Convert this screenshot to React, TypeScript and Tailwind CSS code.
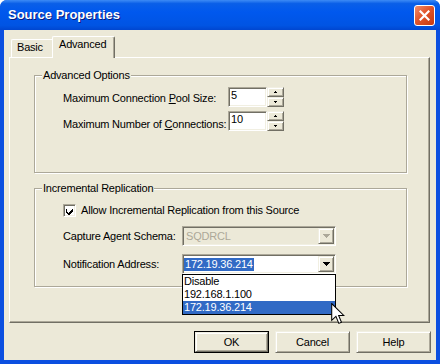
import React from 'react';

// classic 3D edges, XP beige scheme
const raised =
  'border border-t-[#f1efe2] border-l-[#f1efe2] border-r-[#716f64] border-b-[#716f64] shadow-[inset_1px_1px_0_#fff,inset_-1px_-1px_0_#aca899]';
const sunken =
  'border border-t-[#aca899] border-l-[#aca899] border-r-white border-b-white shadow-[inset_1px_1px_0_#716f64,inset_-1px_-1px_0_#f1efe2]';

function Tri({ rows, up = false, color = '#000' }: { rows: number; up?: boolean; color?: string }) {
  const w = rows * 2 - 1;
  return (
    <svg width={w} height={rows} viewBox={`0 0 ${w} ${rows}`} shapeRendering="crispEdges">
      {Array.from({ length: rows }, (_, i) => {
        const r = up ? rows - 1 - i : i;
        return <rect key={i} x={r} y={i} width={w - 2 * r} height={1} fill={color} />;
      })}
    </svg>
  );
}

function Spin({ value }: { value: string }) {
  return (
    <div className="flex">
      <div className={`w-[39px] h-[20px] bg-white pl-[2px] leading-[14px] ${sunken}`}>{value}</div>
      <div className="flex flex-col w-[17px] h-[20px]">
        <div className={`h-[10px] flex items-center justify-center bg-[#ece9d8] ${raised}`}>
          <Tri rows={2} up />
        </div>
        <div className={`h-[10px] flex items-center justify-center bg-[#ece9d8] ${raised}`}>
          <Tri rows={2} />
        </div>
      </div>
    </div>
  );
}

function Combo({ disabled, children }: { disabled?: boolean; children: React.ReactNode }) {
  return (
    <div className={`w-[154px] h-[20px] flex p-[1px] ${disabled ? 'bg-[#ece9d8]' : 'bg-white'} ${sunken}`}>
      <div className="flex-1 flex items-center">{children}</div>
      <div className={`w-[16px] h-[16px] flex items-center justify-center bg-[#ece9d8] ${raised}`}>
        <Tri rows={4} color={disabled ? '#aca899' : '#000'} />
      </div>
    </div>
  );
}

function Group({ title, h, children }: { title: string; h: string; children: React.ReactNode }) {
  return (
    <div className={`relative w-[373px] ${h} border border-[#aca899] shadow-[1px_1px_0_#fff,inset_1px_1px_0_#fff] pl-[28px]`}>
      <span className="absolute -top-[7px] left-[7px] px-[1px] bg-[#ece9d8] leading-[13px]">{title}</span>
      {children}
    </div>
  );
}

function Button({ label, isDefault }: { label: string; isDefault?: boolean }) {
  return (
    <div className={`w-[75px] h-[22px] ${isDefault ? 'border border-black' : ''}`}>
      <div className={`h-full flex items-center justify-center bg-[#ece9d8] ${raised}`}>{label}</div>
    </div>
  );
}

function Cursor() {
  return (
    <svg width="14" height="22" viewBox="0 0 13 21" className="absolute left-[148px] top-[28px]">
      <path d="M0.5 0.5 L0.5 16.5 L4.5 12.8 L7.3 19.5 L9.8 18.4 L7.1 11.9 L12 11.9 Z" fill="#fff" stroke="#000" strokeWidth="1" />
    </svg>
  );
}

export default function App() {
  return (
    <div className="w-[440px] h-[364px] flex flex-col bg-[#0b4fe0] rounded-t-[7px] overflow-hidden font-['Liberation_Sans',Arial,sans-serif] text-[11px] text-black tracking-[-0.2px] select-none">
      {/* title bar */}
      <div className="h-[30px] shrink-0 flex items-center pl-[8px] pr-[5px] bg-[linear-gradient(180deg,#3d8bf5_0%,#0a5fe8_12%,#0058ee_40%,#0054e3_85%,#0046d0_100%)]">
        <span className="flex-1 text-white font-bold text-[13px] tracking-normal [text-shadow:1px_1px_0_#0a1a7a]">
          Source Properties
        </span>
        <div className="w-[21px] h-[21px] rounded-[3px] border border-white bg-[linear-gradient(135deg,#f08d6c_0%,#e2552b_45%,#c3390f_100%)] flex items-center justify-center">
          <svg width="11" height="11" viewBox="0 0 11 11">
            <path d="M1.5 1.5 L9.5 9.5 M9.5 1.5 L1.5 9.5" stroke="#fff" strokeWidth="2.2" strokeLinecap="square" />
          </svg>
        </div>
      </div>

      {/* client area */}
      <div className="flex-1 flex flex-col mx-[4px] mb-[4px] bg-[#ece9d8]">
        <div className="h-[27px] flex items-end pl-[7px]">
          <div className="w-[41px] h-[18px] border-t border-l border-white rounded-tl-[2px] pl-[5px] pt-[1px] leading-[13px]">
            Basic
          </div>
          <div className="relative z-10 -mb-px w-[63px] h-[22px] bg-[#ece9d8] border-t border-l border-white border-r border-r-[#716f64] shadow-[inset_-1px_0_0_#aca899] rounded-t-[2px] pl-[6px] pt-[1px] leading-[13px]">
            Advanced
          </div>
        </div>

        <div className="ml-[5px] w-[421px] h-[266px] border border-t-white border-l-white border-r-[#716f64] border-b-[#716f64] shadow-[inset_-1px_-1px_0_#aca899] pt-[17px] pl-[24px] flex flex-col gap-[15px]">
          <Group title="Advanced Options" h="h-[98px]">
            <div className="pt-[11px] flex flex-col gap-[4px]">
              <div className="flex items-start">
                <span className="w-[165px] mt-[5px] leading-[13px]">
                  Maximum Connection <u>P</u>ool Size:
                </span>
                <Spin value="5" />
              </div>
              <div className="flex items-start">
                <span className="w-[165px] mt-[7px] leading-[13px]">
                  Maximum Number of <u>C</u>onnections:
                </span>
                <Spin value="10" />
              </div>
            </div>
          </Group>

          <Group title="Incremental Replication" h="h-[99px]">
            <div className="pt-[15px] flex flex-col">
              <div className="flex items-center gap-[5px] h-[13px]">
                <div className={`w-[13px] h-[13px] bg-white flex items-center justify-center ${sunken}`}>
                  <svg width="9" height="9" viewBox="0 0 9 9" shapeRendering="crispEdges">
                    <path d="M1 3h1v3h1v1h1v-1h1v-1h1v-1h1v-1h1v3h-1v1h-1v1h-1v1h-2v-1h-1v-1h-1z" fill="#000" />
                  </svg>
                </div>
                <span className="leading-[13px]">Allow Incremental Replication from this Source</span>
              </div>
              <div className="mt-[9px] flex items-center">
                <span className="w-[119px] leading-[13px]">Capture Agent Schema:</span>
                <Combo disabled>
                  <span className="pl-[2px] text-[#aca899] leading-[13px]">SQDRCL</span>
                </Combo>
              </div>
              <div className="mt-[8px] flex items-center">
                <span className="w-[119px] leading-[13px]">Notification Address:</span>
                <div className="relative">
                  <Combo>
                    <span className="px-[1px] h-[13px] leading-[13px] bg-[#316ac5] text-white">172.19.36.214</span>
                  </Combo>
                  <div className="absolute top-full left-0 z-20 w-[154px] bg-white border border-black">
                    <div className="h-[13px] leading-[13px] pl-[1px]">Disable</div>
                    <div className="h-[13px] leading-[13px] pl-[1px]">192.168.1.100</div>
                    <div className="h-[13px] leading-[13px] pl-[1px] bg-[#316ac5] text-white">172.19.36.214</div>
                    <Cursor />
                  </div>
                </div>
              </div>
            </div>
          </Group>
        </div>

        <div className="mt-[8px] flex justify-end gap-[6px] pr-[5px]">
          <Button label="OK" isDefault />
          <Button label="Cancel" />
          <Button label="Help" />
        </div>
      </div>
    </div>
  );
}
